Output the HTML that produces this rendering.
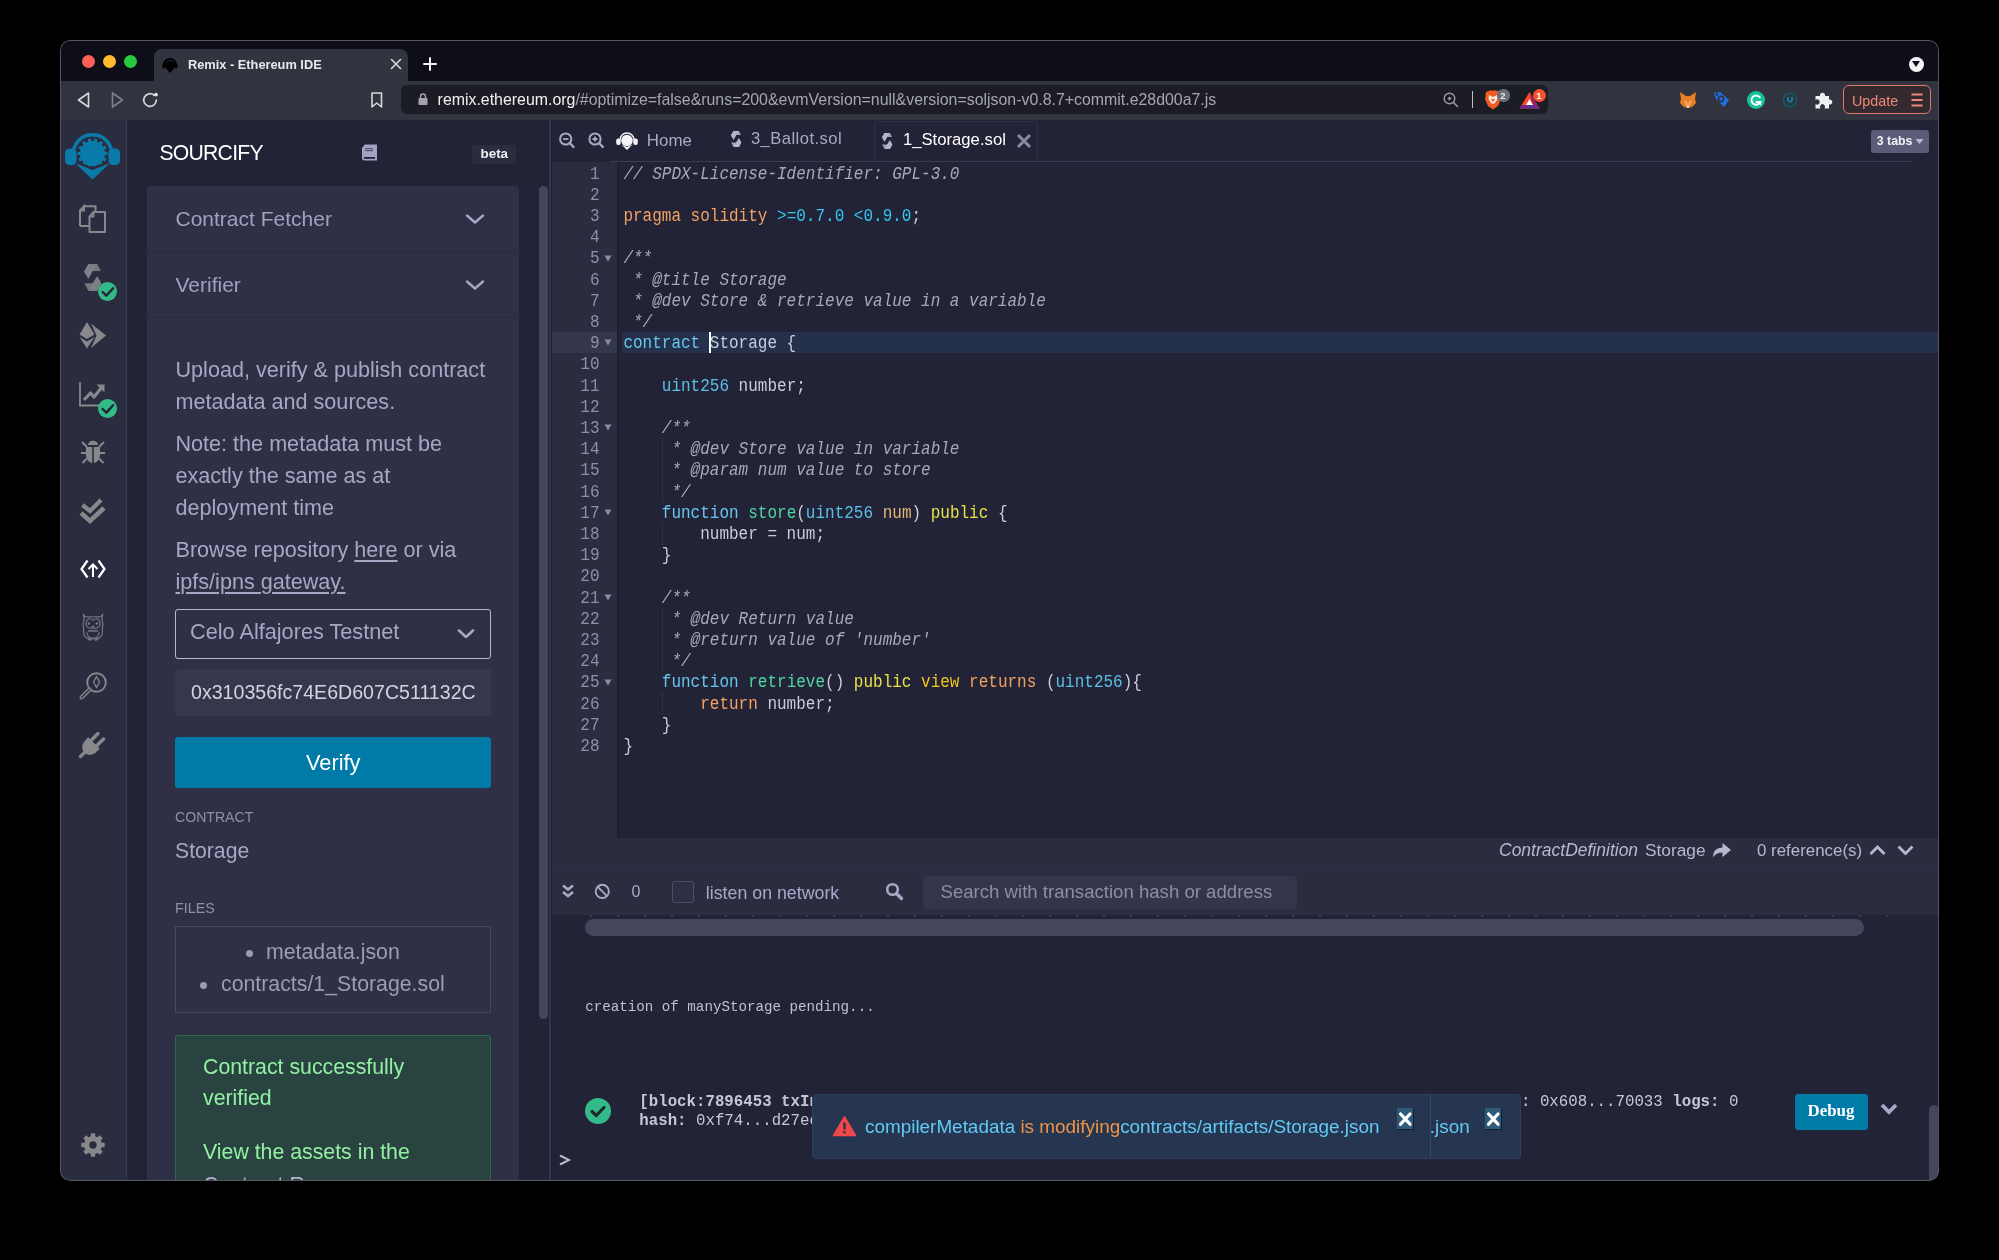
<!DOCTYPE html><html><head><meta charset="utf-8"><title>Remix</title><style>html,body{margin:0;padding:0;background:#000;}body{width:1999px;height:1260px;position:relative;overflow:hidden;}</style></head><body>
<div style="position:absolute;left:60px;top:40px;width:1879px;height:1141px;border-radius:10px;overflow:hidden;background:#0e0e18;">
<div style="position:absolute;left:-60px;top:-40px;width:1999px;height:1260px;will-change:transform;">
<div style="position:absolute;left:60px;top:40px;width:1879px;height:40px;background:#0e0e18;"></div>
<div style="position:absolute;left:60px;top:80.5px;width:1879px;height:39.5px;background:#31333f;"></div>
<div style="position:absolute;left:154px;top:49px;width:254px;height:32px;background:#31333f;border-radius:8px 8px 0 0;"></div>
<div style="position:absolute;left:81.5px;top:54.5px;width:13px;height:13px;background:#fe5f57;border-radius:50%;"></div>
<div style="position:absolute;left:102.5px;top:54.5px;width:13px;height:13px;background:#febc2e;border-radius:50%;"></div>
<div style="position:absolute;left:123.5px;top:54.5px;width:13px;height:13px;background:#28c840;border-radius:50%;"></div>
<svg style="position:absolute;left:161px;top:56px;" width="18" height="18" viewBox="0 0 18 18"><path d="M3 9 a6 6 0 0 1 12 0" fill="none" stroke="#000" stroke-width="2.2"/><rect x="1.5" y="7.5" width="3" height="5" rx="1.5" fill="#000"/><rect x="13.5" y="7.5" width="3" height="5" rx="1.5" fill="#000"/><circle cx="9" cy="9.5" r="4.8" fill="#000"/><path d="M5.5 13 L9 17 L12.5 13 Z" fill="#000"/></svg>
<div style="position:absolute;left:188px;top:58.96px;font-family:'Liberation Sans', sans-serif;font-size:12.8px;line-height:12.8px;color:#e9e9ec;font-weight:700;font-style:normal;white-space:pre;">Remix - Ethereum IDE</div>
<svg style="position:absolute;left:390px;top:58px;" width="12" height="12" viewBox="0 0 12 12"><path d="M1.5 1.5 L10.5 10.5 M10.5 1.5 L1.5 10.5" stroke="#d8d8dc" stroke-width="1.6" stroke-linecap="round"/></svg>
<svg style="position:absolute;left:423px;top:57px;" width="14" height="14" viewBox="0 0 14 14"><path d="M7 1 V13 M1 7 H13" stroke="#f2f2f4" stroke-width="2" stroke-linecap="round"/></svg>
<div style="position:absolute;left:1908.5px;top:56.5px;width:15px;height:15px;background:#f4f4f6;border-radius:50%;"></div>
<svg style="position:absolute;left:1911px;top:60px;" width="10" height="8" viewBox="0 0 10 8"><path d="M1 1 H9 L5 7 Z" fill="#0e0e18"/></svg>
<svg style="position:absolute;left:76px;top:91px;" width="16" height="18" viewBox="0 0 16 18"><path d="M12.5 2 L12.5 16 L2.5 9 Z" fill="none" stroke="#d6d6dc" stroke-width="1.6" stroke-linejoin="round"/></svg>
<svg style="position:absolute;left:110px;top:91px;" width="16" height="18" viewBox="0 0 16 18"><path d="M2.5 2 L2.5 16 L12.5 9 Z" fill="none" stroke="#7d7f8c" stroke-width="1.6" stroke-linejoin="round"/></svg>
<svg style="position:absolute;left:141px;top:90px;" width="18" height="18" viewBox="0 0 18 18"><path d="M13.2 5.3 A6.3 6.3 0 1 0 15.3 10.2" fill="none" stroke="#d6d6dc" stroke-width="1.7" stroke-linecap="round"/><circle cx="15" cy="4.6" r="1.9" fill="#e8e8ec"/></svg>
<svg style="position:absolute;left:369px;top:91px;" width="16" height="18" viewBox="0 0 16 18"><path d="M3 2 H12.5 V16 L7.75 12 L3 16 Z" fill="none" stroke="#d6d6dc" stroke-width="1.6" stroke-linejoin="round"/></svg>
<div style="position:absolute;left:401px;top:85px;width:1147px;height:29px;background:#1b1c24;border-radius:6px;"></div>
<svg style="position:absolute;left:416px;top:92px;" width="14" height="14" viewBox="0 0 14 14"><rect x="2.5" y="6" width="9" height="7" rx="1" fill="#a3a4ab"/><path d="M4.5 6 V4.5 a2.5 2.5 0 0 1 5 0 V6" fill="none" stroke="#a3a4ab" stroke-width="1.4"/></svg>
<div style="position:absolute;left:437.6px;top:91.84px;font-family:'Liberation Sans', sans-serif;font-size:15.9px;line-height:15.9px;white-space:pre;color:#a6a7ae"><span style="color:#f2f2f4">remix.ethereum.org</span>/#optimize=false&amp;runs=200&amp;evmVersion=null&amp;version=soljson-v0.8.7+commit.e28d00a7.js</div>
<svg style="position:absolute;left:1442px;top:91px;" width="18" height="18" viewBox="0 0 18 18"><circle cx="7.5" cy="7.5" r="5.3" fill="none" stroke="#9a9ba3" stroke-width="1.4"/><path d="M11.5 11.5 L15.5 15.5" stroke="#9a9ba3" stroke-width="1.6" stroke-linecap="round"/><path d="M7.5 5.5 L9.5 7.5 L7.5 9.5 L5.5 7.5Z" fill="#9a9ba3"/></svg>
<div style="position:absolute;left:1472px;top:91px;width:1.3px;height:17px;background:#bdbec4;"></div>
<svg style="position:absolute;left:1483px;top:89px;" width="20" height="22" viewBox="0 0 20 22"><path d="M3 3 L7 1.5 H13 L17 3 L18 10 L15 17 L10 20.5 L5 17 L2 10 Z" fill="#f15a22"/><path d="M6 6 L10 8 L14 6 L14.5 10 L12 14 L10 15 L8 14 L5.5 10 Z" fill="#fff" opacity="0.85"/><path d="M8 10 H12 L10 13Z" fill="#f15a22"/></svg>
<div style="position:absolute;left:1497px;top:89px;width:12.5px;height:12.5px;background:#6b6d78;border-radius:50%;"></div>
<div style="position:absolute;left:1500.3px;top:91.26px;font-family:'Liberation Sans', sans-serif;font-size:9.5px;line-height:9.5px;color:#e8e8ec;font-weight:700;font-style:normal;white-space:pre;">2</div>
<svg style="position:absolute;left:1519px;top:90px;" width="22" height="20" viewBox="0 0 22 20"><path d="M10.5 2 L20.5 18.5 H0.5 Z" fill="#ff4724"/><path d="M10.5 2 L20.5 18.5 H14 Z" fill="#9e1f63"/><path d="M0.5 18.5 H20.5 L18 15 H3 Z" fill="#662d91"/><path d="M10.5 9 L14 15 H7 Z" fill="#fff"/></svg>
<div style="position:absolute;left:1532.5px;top:88.5px;width:13px;height:13px;background:#f4512c;border-radius:50%;"></div>
<div style="position:absolute;left:1536.3px;top:90.96px;font-family:'Liberation Sans', sans-serif;font-size:9.5px;line-height:9.5px;color:#fff;font-weight:700;font-style:normal;white-space:pre;">1</div>
<svg style="position:absolute;left:1678px;top:90px;" width="20" height="20" viewBox="0 0 20 20"><path d="M2 2 L8 6 H12 L18 2 L17 9 L18 13 L14 17 L10 18 L6 17 L2 13 L3 9 Z" fill="#e87f24"/><path d="M6 10 L9 12 L10 16 L11 12 L14 10 L12 15 L10 17 L8 15Z" fill="#f5b27a"/><circle cx="10" cy="16.8" r="1.2" fill="#ddd"/></svg>
<svg style="position:absolute;left:1712px;top:90px;" width="20" height="20" viewBox="0 0 20 20"><path d="M2 3 L8 2 L17 10 L12 17 L4 9 Z" fill="#1f6fe5"/><circle cx="9" cy="9" r="2.6" fill="none" stroke="#31333f" stroke-width="1.6"/><circle cx="5" cy="4.5" r="1.2" fill="#31333f"/></svg>
<div style="position:absolute;left:1747px;top:91px;width:18px;height:18px;background:#15c39a;border-radius:50%;"></div>
<svg style="position:absolute;left:1747px;top:91px;" width="18" height="18" viewBox="0 0 18 18"><path d="M12.8 6.3 A4.6 4.6 0 1 0 13.3 11 H9.5" fill="none" stroke="#fff" stroke-width="1.9" stroke-linecap="round"/><path d="M11 13 L13.5 11 L13.5 14" fill="none" stroke="#fff" stroke-width="1.4"/></svg>
<svg style="position:absolute;left:1781px;top:91px;" width="18" height="18" viewBox="0 0 18 18"><circle cx="9" cy="9" r="6.8" fill="none" stroke="#0b6276" stroke-width="1.3"/><path d="M7 6 Q6 11 10 10.5 Q11.5 10 11 6" fill="none" stroke="#0c8aa8" stroke-width="1.8"/></svg>
<svg style="position:absolute;left:1813px;top:89px;" width="22" height="22" viewBox="0 0 22 22"><path d="M2.5 7 H7 A2.6 2.6 0 1 1 12 7 H16 V10.5 A2.6 2.6 0 1 1 16 15.5 V19.5 H11.5 A2.6 2.6 0 1 0 7.5 19.5 H2.5 V15 A2.6 2.6 0 1 0 2.5 11 Z" fill="#f0f0f2"/></svg>
<div style="position:absolute;left:1843px;top:85px;width:88px;height:29px;background:#332a30;border-radius:6px;box-sizing:border-box;border:1.5px solid #e0786b;"></div>
<div style="position:absolute;left:1852px;top:94.40px;font-family:'Liberation Sans', sans-serif;font-size:14.3px;line-height:14.3px;color:#ef8879;font-weight:400;font-style:normal;white-space:pre;">Update</div>
<svg style="position:absolute;left:1910px;top:92px;" width="14" height="16" viewBox="0 0 14 16"><path d="M1.5 2.5 H12.5 M1.5 8 H12.5 M1.5 13.5 H12.5" stroke="#ef8879" stroke-width="1.8"/></svg>
<div style="position:absolute;left:60px;top:120px;width:67px;height:1060px;background:#2a2c3f;"></div>
<div style="position:absolute;left:126px;top:120px;width:1px;height:1060px;background:#3a3c52;"></div>
<div style="position:absolute;left:127px;top:120px;width:423px;height:1060px;background:#222336;"></div>
<div style="position:absolute;left:550px;top:120px;width:1389px;height:1060px;background:#222336;"></div>
<svg style="position:absolute;left:62px;top:128px;" width="62" height="56" viewBox="0 0 62 56"><path d="M13.2 34.6 A19.3 19.3 0 1 1 47.8 34.6" fill="none" stroke="#0a7aa8" stroke-width="3.6"/><rect x="3" y="20.5" width="11.5" height="16.5" rx="4.5" fill="#0a7aa8"/><rect x="46.5" y="20.5" width="11.5" height="16.5" rx="4.5" fill="#0a7aa8"/><polygon points="15.59,27.15 15.59,23.85 17.98,24.06 18.60,21.36 16.35,20.51 17.78,17.55 19.85,18.77 21.57,16.61 19.92,14.87 22.49,12.82 23.82,14.82 26.31,13.62 25.58,11.33 28.79,10.60 29.12,12.98 31.88,12.98 32.21,10.60 35.42,11.33 34.69,13.62 37.18,14.82 38.51,12.82 41.08,14.87 39.43,16.61 41.15,18.77 43.22,17.55 44.65,20.51 42.40,21.36 43.02,24.06 45.41,23.85 45.41,27.15 43.02,26.94 42.40,29.64 44.65,30.49 43.22,33.45 41.15,32.23 39.43,34.39 41.08,36.13 38.51,38.18 37.18,36.18 34.69,37.38 35.42,39.67 32.21,40.40 31.88,38.02 29.12,38.02 28.79,40.40 25.58,39.67 26.31,37.38 23.82,36.18 22.49,38.18 19.92,36.13 21.57,34.39 19.85,32.23 17.78,33.45 16.35,30.49 18.60,29.64 17.98,26.94" fill="#0a7aa8"/><path d="M12.5 34.5 L30.5 41.5 L48.5 34.5 L30.5 51.5 Z" fill="#0a7aa8"/><path d="M14 34.2 L30.5 40.6 L47 34.2" fill="none" stroke="#2a2c3f" stroke-width="2.4"/></svg>
<svg style="position:absolute;left:78px;top:204px;" width="30" height="30" viewBox="0 0 30 30"><path d="M6 2.2 H17.5 V8 M2 22 V6.5 L6 2.2 V6.5 H2 M2 22 H11" fill="none" stroke="#87878c" stroke-width="2"/><path d="M15.5 8 H27 V28 H11.5 V12.5 Z M15.5 8 V12.5 H11.5" fill="none" stroke="#87878c" stroke-width="2" stroke-linejoin="round"/></svg>
<svg style="position:absolute;left:80px;top:258px;" width="26" height="40" viewBox="0 0 26 40"><polygon points="8.3,6.3 17.3,6.3 20.8,13 12.7,13 8.4,20.8 4.1,13.5" fill="#77777f"/><polygon points="8.3,6.3 17.3,6.3 12.7,13 8.4,20.8 4.1,13.5" fill="#808089"/><polygon points="17.3,18.2 21.2,25.3 17.3,32.8 8.3,32.8 4.3,25.3 12.7,25.3" fill="#75757e"/><polygon points="17.3,18.2 21.2,25.3 17.3,32.8 8.3,32.8 12.7,25.3" fill="#7e7e87"/></svg>
<div style="position:absolute;left:97.7px;top:281.7px;width:19.6px;height:19.6px;background:#32ba89;border-radius:50%;"></div>
<svg style="position:absolute;left:97.7px;top:281.7px;" width="20" height="20" viewBox="0 0 20 20"><path d="M4.6 10.0 L8.3 13.6 L15.1 6.2" fill="none" stroke="#222336" stroke-width="2.4" stroke-linecap="round" stroke-linejoin="round"/></svg>
<svg style="position:absolute;left:78px;top:320px;" width="30" height="32" viewBox="0 0 30 32"><path d="M9 2 L16.5 14.5 L9 19 L1.5 14.5 Z" fill="#87878c"/><path d="M1.5 17 L9 21.5 L16.5 17 L9 28.5 Z" fill="#87878c"/><path d="M13 3.5 L28 15.5 L13 28 L18.5 15.5 Z" fill="#87878c"/></svg>
<svg style="position:absolute;left:78px;top:381px;" width="30" height="27" viewBox="0 0 30 27"><path d="M2 1 V24.5 H22" fill="none" stroke="#87878c" stroke-width="1.8"/><path d="M6 19 L12.5 12 L16 16 L24 6" fill="none" stroke="#87878c" stroke-width="3.2" stroke-linejoin="round"/><path d="M18.5 3.5 H26.5 V11.5 Z" fill="#87878c"/></svg>
<div style="position:absolute;left:97.7px;top:398.5px;width:19.6px;height:19.6px;background:#32ba89;border-radius:50%;"></div>
<svg style="position:absolute;left:97.7px;top:398.5px;" width="20" height="20" viewBox="0 0 20 20"><path d="M4.6 10.0 L8.3 13.6 L15.1 6.2" fill="none" stroke="#222336" stroke-width="2.4" stroke-linecap="round" stroke-linejoin="round"/></svg>
<svg style="position:absolute;left:79px;top:438px;" width="28" height="28" viewBox="0 0 28 28"><path d="M9 7 A5 4.2 0 0 1 19 7 Z" fill="#87878c"/><path d="M7 9 H21 V17 A7 8 0 0 1 7 17 Z" fill="#87878c"/><path d="M14 9 V25" stroke="#2a2c3f" stroke-width="1.6"/><path d="M2 15 H7 M21 15 H26 M3 4 L8 9 M25 4 L20 9 M3.5 25 L8 20.5 M24.5 25 L20 20.5" stroke="#87878c" stroke-width="2"/></svg>
<svg style="position:absolute;left:78px;top:496px;" width="30" height="30" viewBox="0 0 30 30"><path d="M4.5 9 L12 15 L23 4" fill="none" stroke="#87878c" stroke-width="4.2"/><path d="M3 17 L12 25 L26 12" fill="none" stroke="#87878c" stroke-width="4.6"/></svg>
<svg style="position:absolute;left:79px;top:558px;" width="28" height="22" viewBox="0 0 28 22"><path d="M8.5 2.5 L2.5 11 L8.5 19.5 M19.5 2.5 L25.5 11 L19.5 19.5" fill="none" stroke="#fff" stroke-width="2.2" stroke-linejoin="miter"/><path d="M14 19 V6.5 M9.5 11 L14 6.5 L18.5 11" fill="none" stroke="#fff" stroke-width="2"/></svg>
<svg style="position:absolute;left:78px;top:610px;" width="30" height="35" viewBox="0 0 30 35"><path d="M5.2 4.2 L7 6.6 Q15 7.4 23 6.6 L24.8 4.2 L23.8 8.5 Q25.8 14 24.3 19.5 Q25 24.5 22.3 27.3 L20 28.8 H10 L7.7 27.3 Q5 24.5 5.7 19.5 Q4.2 14 6.2 8.5 Z" fill="none" stroke="#787984" stroke-width="1.15" stroke-linejoin="round"/><path d="M15 10.4 Q13 8.4 10.8 8.8 A4.7 4.7 0 1 0 15 17.8 A4.7 4.7 0 1 0 19.2 8.8 Q17 8.4 15 10.4 Z" fill="none" stroke="#787984" stroke-width="1.15"/><circle cx="10.8" cy="13.5" r="1.2" fill="#787984"/><circle cx="18.9" cy="13.5" r="1.2" fill="#787984"/><path d="M13.6 16.6 Q15 14.9 16.4 16.6 Q15 17.9 13.6 16.6 Z" fill="none" stroke="#787984" stroke-width="1"/><path d="M9.8 20.9 H20.2" stroke="#787984" stroke-width="1.5"/><path d="M8.8 22.2 Q9.2 28 15 28.2 Q20.8 28 21.2 22.2" fill="none" stroke="#787984" stroke-width="1.15"/><path d="M10.2 28.3 L12.2 30.2 M17.8 30.2 L19.8 28.3" stroke="#787984" stroke-width="1.7" stroke-linecap="round"/></svg>
<svg style="position:absolute;left:78px;top:671px;" width="30" height="32" viewBox="0 0 30 32"><circle cx="18.5" cy="11.5" r="9.3" fill="none" stroke="#87878c" stroke-width="1.9"/><path d="M11.5 18.5 L3.5 26.5" stroke="#87878c" stroke-width="4" stroke-linecap="round"/><path d="M11.5 18.5 L3.5 26.5" stroke="#2a2c3f" stroke-width="1.3" stroke-linecap="round"/><path d="M18.5 5.5 L21.5 11 L18.5 16.5 L15.5 11 Z" fill="none" stroke="#87878c" stroke-width="1.3"/></svg>
<svg style="position:absolute;left:77px;top:728px;" width="32" height="32" viewBox="0 0 32 32"><path d="M6.5 24 A9 9 0 0 1 10.5 11 L21 21.5 A9 9 0 0 1 8 25.5 Z" fill="#87878c"/><path d="M14 12.5 L21 5.5 M19.5 18 L26.5 11" stroke="#87878c" stroke-width="3.4" stroke-linecap="round"/><path d="M8.5 23.5 L3.5 28.5" stroke="#87878c" stroke-width="3.4" stroke-linecap="round"/><path d="M10 10.5 L21.5 22" stroke="#87878c" stroke-width="3.4"/></svg>
<svg style="position:absolute;left:80px;top:1132px;" width="26" height="26" viewBox="0 0 26 26"><circle cx="13" cy="13" r="6.4" fill="none" stroke="#87878c" stroke-width="5.4"/><rect x="10.8" y="1.3" width="4.4" height="5.5" fill="#87878c" transform="rotate(0 13 13)"/><rect x="10.8" y="1.3" width="4.4" height="5.5" fill="#87878c" transform="rotate(45 13 13)"/><rect x="10.8" y="1.3" width="4.4" height="5.5" fill="#87878c" transform="rotate(90 13 13)"/><rect x="10.8" y="1.3" width="4.4" height="5.5" fill="#87878c" transform="rotate(135 13 13)"/><rect x="10.8" y="1.3" width="4.4" height="5.5" fill="#87878c" transform="rotate(180 13 13)"/><rect x="10.8" y="1.3" width="4.4" height="5.5" fill="#87878c" transform="rotate(225 13 13)"/><rect x="10.8" y="1.3" width="4.4" height="5.5" fill="#87878c" transform="rotate(270 13 13)"/><rect x="10.8" y="1.3" width="4.4" height="5.5" fill="#87878c" transform="rotate(315 13 13)"/></svg>
<div style="position:absolute;left:159.4px;top:142.45px;font-family:'Liberation Sans', sans-serif;font-size:21.2px;line-height:21.2px;color:#ffffff;font-weight:400;font-style:normal;white-space:pre;letter-spacing:-0.75px;">SOURCIFY</div>
<svg style="position:absolute;left:361px;top:144px;" width="17" height="17" viewBox="0 0 17 17"><path d="M2.5 2.5 Q2.5 0.5 4.5 0.5 H16 V16.5 H4 Q1 16.5 1 14 V4 Z" fill="#a2a3c2"/><rect x="4" y="4" width="8" height="1.2" fill="#222336" opacity="0.6"/><rect x="4" y="6" width="8" height="1.2" fill="#222336" opacity="0.6"/><rect x="3" y="13" width="11" height="1.8" fill="#222336"/></svg>
<div style="position:absolute;left:471.7px;top:144.7px;width:44.6px;height:19px;background:#2a2c3f;border-radius:2px;"></div>
<div style="position:absolute;left:480.5px;top:147.36px;font-family:'Liberation Sans', sans-serif;font-size:13.4px;line-height:13.4px;color:#f0f0f4;font-weight:700;font-style:normal;white-space:pre;">beta</div>
<div style="position:absolute;left:147px;top:186.4px;width:371.8px;height:1000px;background:#2f3045;border-radius:4px 4px 0 0;"></div>
<div style="position:absolute;left:147px;top:251px;width:371.8px;height:1.2px;background:#282a3d;"></div>
<div style="position:absolute;left:147px;top:317px;width:371.8px;height:1.2px;background:#282a3d;"></div>
<div style="position:absolute;left:175.5px;top:208.22px;font-family:'Liberation Sans', sans-serif;font-size:21px;line-height:21px;color:#9fa1c0;font-weight:400;font-style:normal;white-space:pre;">Contract Fetcher</div>
<div style="position:absolute;left:175.5px;top:273.72px;font-family:'Liberation Sans', sans-serif;font-size:21px;line-height:21px;color:#9fa1c0;font-weight:400;font-style:normal;white-space:pre;">Verifier</div>
<svg style="position:absolute;left:464px;top:212px;" width="22" height="14" viewBox="0 0 22 14"><path d="M3 3.5 L11 10.5 L19 3.5" fill="none" stroke="#a5a7c5" stroke-width="2.4" stroke-linecap="round" stroke-linejoin="round"/></svg>
<svg style="position:absolute;left:464px;top:277.5px;" width="22" height="14" viewBox="0 0 22 14"><path d="M3 3.5 L11 10.5 L19 3.5" fill="none" stroke="#a5a7c5" stroke-width="2.4" stroke-linecap="round" stroke-linejoin="round"/></svg>
<div style="position:absolute;left:175.5px;top:359.02px;font-family:'Liberation Sans', sans-serif;font-size:21.6px;line-height:21.6px;color:#a5a7c5;font-weight:400;font-style:normal;white-space:pre;">Upload, verify &amp; publish contract</div>
<div style="position:absolute;left:175.5px;top:390.62px;font-family:'Liberation Sans', sans-serif;font-size:21.6px;line-height:21.6px;color:#a5a7c5;font-weight:400;font-style:normal;white-space:pre;">metadata and sources.</div>
<div style="position:absolute;left:175.5px;top:432.82px;font-family:'Liberation Sans', sans-serif;font-size:21.6px;line-height:21.6px;color:#a5a7c5;font-weight:400;font-style:normal;white-space:pre;">Note: the metadata must be</div>
<div style="position:absolute;left:175.5px;top:465.02px;font-family:'Liberation Sans', sans-serif;font-size:21.6px;line-height:21.6px;color:#a5a7c5;font-weight:400;font-style:normal;white-space:pre;">exactly the same as at</div>
<div style="position:absolute;left:175.5px;top:496.62px;font-family:'Liberation Sans', sans-serif;font-size:21.6px;line-height:21.6px;color:#a5a7c5;font-weight:400;font-style:normal;white-space:pre;">deployment time</div>
<div style="position:absolute;left:175.5px;top:539.02px;font-family:'Liberation Sans', sans-serif;font-size:21.6px;line-height:21.6px;color:#a5a7c5;font-weight:400;font-style:normal;white-space:pre;">Browse repository <span style="text-decoration:underline;text-underline-offset:3px">here</span> or via</div>
<div style="position:absolute;left:175.5px;top:570.62px;font-family:'Liberation Sans', sans-serif;font-size:21.6px;line-height:21.6px;color:#a5a7c5;font-weight:400;font-style:normal;white-space:pre;"><span style="text-decoration:underline;text-underline-offset:3px">ipfs/ipns gateway.</span></div>
<div style="position:absolute;left:175px;top:609px;width:316.3px;height:49.6px;background:transparent;box-sizing:border-box;border:1.3px solid #b9bac8;border-radius:3px;"></div>
<div style="position:absolute;left:190px;top:621.13px;font-family:'Liberation Sans', sans-serif;font-size:21.7px;line-height:21.7px;color:#a5a7c5;font-weight:400;font-style:normal;white-space:pre;">Celo Alfajores Testnet</div>
<svg style="position:absolute;left:456px;top:627px;" width="20" height="14" viewBox="0 0 20 14"><path d="M3 3.5 L10 10 L17 3.5" fill="none" stroke="#a5a7c5" stroke-width="2.6" stroke-linecap="round" stroke-linejoin="round"/></svg>
<div style="position:absolute;left:175px;top:669.4px;width:316.3px;height:46.6px;background:#35384c;border-radius:3px;"></div>
<div style="position:absolute;left:175px;top:669.4px;width:301px;height:46.6px;overflow:hidden">
<div style="position:absolute;left:16px;top:13.31px;font-family:'Liberation Sans', sans-serif;font-size:19.6px;line-height:19.6px;color:#d2d3de;font-weight:400;font-style:normal;white-space:pre;">0x310356fc74E6D607C511132C9D9aC6</div>
</div>
<div style="position:absolute;left:175px;top:737.3px;width:316.3px;height:51px;background:#007aa6;border-radius:3px;"></div>
<div style="position:absolute;left:306px;top:752.05px;font-family:'Liberation Sans', sans-serif;font-size:21.8px;line-height:21.8px;color:#ffffff;font-weight:400;font-style:normal;white-space:pre;">Verify</div>
<div style="position:absolute;left:175px;top:810.46px;font-family:'Liberation Sans', sans-serif;font-size:14.1px;line-height:14.1px;color:#8f90a3;font-weight:400;font-style:normal;white-space:pre;">CONTRACT</div>
<div style="position:absolute;left:175px;top:840.05px;font-family:'Liberation Sans', sans-serif;font-size:21.2px;line-height:21.2px;color:#a5a7c5;font-weight:400;font-style:normal;white-space:pre;">Storage</div>
<div style="position:absolute;left:175px;top:900.60px;font-family:'Liberation Sans', sans-serif;font-size:14.3px;line-height:14.3px;color:#8f90a3;font-weight:400;font-style:normal;white-space:pre;">FILES</div>
<div style="position:absolute;left:175px;top:926px;width:316.3px;height:86.7px;background:transparent;box-sizing:border-box;border:1px solid #44465b;"></div>
<div style="position:absolute;left:245.5px;top:949.5px;width:7px;height:7px;background:#9a9bab;border-radius:50%;"></div>
<div style="position:absolute;left:266px;top:941.97px;font-family:'Liberation Sans', sans-serif;font-size:21.3px;line-height:21.3px;color:#9c9daf;font-weight:400;font-style:normal;white-space:pre;">metadata.json</div>
<div style="position:absolute;left:199.5px;top:981.5px;width:7px;height:7px;background:#9a9bab;border-radius:50%;"></div>
<div style="position:absolute;left:221px;top:973.87px;font-family:'Liberation Sans', sans-serif;font-size:21.3px;line-height:21.3px;color:#9c9daf;font-weight:400;font-style:normal;white-space:pre;">contracts/1_Storage.sol</div>
<div style="position:absolute;left:175px;top:1035px;width:316.3px;height:200px;background:#284340;box-sizing:border-box;border:1px solid #2c6a50;border-radius:3px;"></div>
<div style="position:absolute;left:203px;top:1056.97px;font-family:'Liberation Sans', sans-serif;font-size:21.3px;line-height:21.3px;color:#93f0a3;font-weight:400;font-style:normal;white-space:pre;">Contract successfully</div>
<div style="position:absolute;left:203px;top:1088.37px;font-family:'Liberation Sans', sans-serif;font-size:21.3px;line-height:21.3px;color:#93f0a3;font-weight:400;font-style:normal;white-space:pre;">verified</div>
<div style="position:absolute;left:203px;top:1142.47px;font-family:'Liberation Sans', sans-serif;font-size:21.3px;line-height:21.3px;color:#93f0a3;font-weight:400;font-style:normal;white-space:pre;">View the assets in the</div>
<div style="position:absolute;left:203px;top:1175.47px;font-family:'Liberation Sans', sans-serif;font-size:21.3px;line-height:21.3px;color:#b4b2d6;font-weight:400;font-style:normal;white-space:pre;">Contract Repo</div>
<div style="position:absolute;left:538.9px;top:186.2px;width:9.4px;height:832.4px;background:#44465e;border-radius:5px;"></div>
<div style="position:absolute;left:549px;top:120px;width:1.7px;height:1060px;background:#33354a;"></div>
<div style="position:absolute;left:550.8px;top:120px;width:1.2px;height:1060px;background:#1f2033;"></div>
<svg style="position:absolute;left:557px;top:131px;" width="20" height="20" viewBox="0 0 20 20"><circle cx="8.7" cy="8" r="5.6" fill="none" stroke="#a8a9c8" stroke-width="2"/><path d="M12.7 12 L16.5 16" stroke="#a8a9c8" stroke-width="2.4" stroke-linecap="round"/><path d="M6 8 H11.4" stroke="#a8a9c8" stroke-width="1.8"/></svg>
<svg style="position:absolute;left:586px;top:131px;" width="20" height="20" viewBox="0 0 20 20"><circle cx="9" cy="8" r="5.6" fill="none" stroke="#a8a9c8" stroke-width="2"/><path d="M13 12 L16.8 16" stroke="#a8a9c8" stroke-width="2.4" stroke-linecap="round"/><path d="M6.5 8 H11.5 M9 5.5 V10.5" stroke="#a8a9c8" stroke-width="1.8"/></svg>
<svg style="position:absolute;left:615px;top:130px;" width="24" height="21" viewBox="0 0 24 21"><path d="M5 10 A7 7 0 0 1 19 10" fill="none" stroke="#f4f4f8" stroke-width="1.5"/><rect x="1.2" y="8.5" width="4.5" height="6.5" rx="2" fill="#f4f4f8"/><rect x="18.3" y="8.5" width="4.5" height="6.5" rx="2" fill="#f4f4f8"/><circle cx="12" cy="10.5" r="5.8" fill="#f4f4f8"/><path d="M6.5 14.5 L12 17 L17.5 14.5 L12 20 Z" fill="#f4f4f8"/></svg>
<div style="position:absolute;left:646.8px;top:133.29px;font-family:'Liberation Sans', sans-serif;font-size:16.9px;line-height:16.9px;color:#a8a9c8;font-weight:400;font-style:normal;white-space:pre;">Home</div>
<svg style="position:absolute;left:730.6px;top:131.4px" width="12" height="17" viewBox="0 0 12 17"><g transform="scale(0.6) translate(-4.1 -6.3)"><polygon points="8.3,6.3 17.3,6.3 20.8,13 12.7,13 8.4,20.8 4.1,13.5" fill="#b4b5cc" opacity="0.85"/><polygon points="8.3,6.3 17.3,6.3 12.7,13 8.4,20.8 4.1,13.5" fill="#b4b5cc"/><polygon points="17.3,18.2 21.2,25.3 17.3,32.8 8.3,32.8 4.3,25.3 12.7,25.3" fill="#b4b5cc" opacity="0.85"/><polygon points="17.3,18.2 21.2,25.3 17.3,32.8 8.3,32.8 12.7,25.3" fill="#b4b5cc"/></g></svg>
<div style="position:absolute;left:750.9px;top:130.55px;font-family:'Liberation Sans', sans-serif;font-size:16.6px;line-height:16.6px;color:#a8a9c8;font-weight:400;font-style:normal;white-space:pre;letter-spacing:0.45px;">3_Ballot.sol</div>
<div style="position:absolute;left:873.7px;top:121px;width:164.2px;height:41px;background:#222336;box-sizing:border-box;border:1px solid #2c2f44;border-bottom:none;"></div>
<svg style="position:absolute;left:882px;top:133px" width="12" height="17" viewBox="0 0 12 17"><g transform="scale(0.6) translate(-4.1 -6.3)"><polygon points="8.3,6.3 17.3,6.3 20.8,13 12.7,13 8.4,20.8 4.1,13.5" fill="#b4b5cc" opacity="0.85"/><polygon points="8.3,6.3 17.3,6.3 12.7,13 8.4,20.8 4.1,13.5" fill="#b4b5cc"/><polygon points="17.3,18.2 21.2,25.3 17.3,32.8 8.3,32.8 4.3,25.3 12.7,25.3" fill="#b4b5cc" opacity="0.85"/><polygon points="17.3,18.2 21.2,25.3 17.3,32.8 8.3,32.8 12.7,25.3" fill="#b4b5cc"/></g></svg>
<div style="position:absolute;left:902.9px;top:131.56px;font-family:'Liberation Sans', sans-serif;font-size:16.7px;line-height:16.7px;color:#ffffff;font-weight:400;font-style:normal;white-space:pre;">1_Storage.sol</div>
<svg style="position:absolute;left:1015px;top:132px;" width="18" height="18" viewBox="0 0 18 18"><path d="M3 3 L15 15 M15 3 L3 15" stroke="#8a8ca6" stroke-width="3"/></svg>
<div style="position:absolute;left:610px;top:161px;width:1302px;height:1.3px;background:#3a3d52;"></div>
<div style="position:absolute;left:1870.8px;top:129.8px;width:57.8px;height:22.8px;background:#5b5c78;border-radius:3px;"></div>
<div style="position:absolute;left:1876.8px;top:135.19px;font-family:'Liberation Sans', sans-serif;font-size:12.3px;line-height:12.3px;color:#f2f2f6;font-weight:700;font-style:normal;white-space:pre;">3 tabs</div>
<svg style="position:absolute;left:1915px;top:138px;" width="9" height="7" viewBox="0 0 9 7"><path d="M0.5 1 H8.5 L4.5 6 Z" fill="#b6b7d0"/></svg>
<div style="position:absolute;left:552px;top:162px;width:64.5px;height:676px;background:#2a2c3f;"></div>
<div style="position:absolute;left:616.5px;top:162px;width:1.5px;height:676px;background:#1c1d2c;"></div>
<div style="position:absolute;left:552px;top:331.9px;width:64.5px;height:20.9px;background:#34364b;"></div>
<div style="position:absolute;left:622px;top:331.9px;width:1317px;height:20.9px;background:#25304a;"></div>
<div style="position:absolute;left:708.8px;top:331.9px;width:2px;height:20.9px;background:#ffffff;"></div>
<div style="position:absolute;left:589.9px;top:166.54px;font-family:'Liberation Mono', monospace;font-size:16px;line-height:16px;color:#8d8fad;font-weight:400;font-style:normal;white-space:pre;transform:scaleY(1.13);transform-origin:0 12.26px;">1</div>
<div style="position:absolute;left:623.4px;top:166.54px;font-family:'Liberation Mono', monospace;font-size:16px;line-height:16px;color:#cbcbe0;font-weight:400;font-style:normal;white-space:pre;transform:scaleY(1.1);transform-origin:0 12.26px;"><span style="color:#a9a9b3;font-style:italic;">// SPDX-License-Identifier: GPL-3.0</span></div>
<div style="position:absolute;left:589.9px;top:187.74px;font-family:'Liberation Mono', monospace;font-size:16px;line-height:16px;color:#8d8fad;font-weight:400;font-style:normal;white-space:pre;transform:scaleY(1.13);transform-origin:0 12.26px;">2</div>
<div style="position:absolute;left:589.9px;top:208.94px;font-family:'Liberation Mono', monospace;font-size:16px;line-height:16px;color:#8d8fad;font-weight:400;font-style:normal;white-space:pre;transform:scaleY(1.13);transform-origin:0 12.26px;">3</div>
<div style="position:absolute;left:623.4px;top:208.94px;font-family:'Liberation Mono', monospace;font-size:16px;line-height:16px;color:#cbcbe0;font-weight:400;font-style:normal;white-space:pre;transform:scaleY(1.1);transform-origin:0 12.26px;"><span style="color:#f3a262;">pragma solidity</span><span style="color:#cbcbe0;"> </span><span style="color:#35c6ef;">&gt;=0.7.0 &lt;0.9.0</span><span style="color:#cbcbe0;">;</span></div>
<div style="position:absolute;left:589.9px;top:230.14px;font-family:'Liberation Mono', monospace;font-size:16px;line-height:16px;color:#8d8fad;font-weight:400;font-style:normal;white-space:pre;transform:scaleY(1.13);transform-origin:0 12.26px;">4</div>
<div style="position:absolute;left:589.9px;top:251.34px;font-family:'Liberation Mono', monospace;font-size:16px;line-height:16px;color:#8d8fad;font-weight:400;font-style:normal;white-space:pre;transform:scaleY(1.13);transform-origin:0 12.26px;">5</div>
<svg style="position:absolute;left:603.5px;top:254.60000000000002px;" width="8" height="7" viewBox="0 0 8 7"><path d="M0.5 0.5 H7.5 L4 6.5 Z" fill="#8a8ca6"/></svg>
<div style="position:absolute;left:623.4px;top:251.34px;font-family:'Liberation Mono', monospace;font-size:16px;line-height:16px;color:#cbcbe0;font-weight:400;font-style:normal;white-space:pre;transform:scaleY(1.1);transform-origin:0 12.26px;"><span style="color:#a9a9b3;font-style:italic;">/**</span></div>
<div style="position:absolute;left:589.9px;top:272.54px;font-family:'Liberation Mono', monospace;font-size:16px;line-height:16px;color:#8d8fad;font-weight:400;font-style:normal;white-space:pre;transform:scaleY(1.13);transform-origin:0 12.26px;">6</div>
<div style="position:absolute;left:623.4px;top:272.54px;font-family:'Liberation Mono', monospace;font-size:16px;line-height:16px;color:#cbcbe0;font-weight:400;font-style:normal;white-space:pre;transform:scaleY(1.1);transform-origin:0 12.26px;"><span style="color:#a9a9b3;font-style:italic;"> * @title Storage</span></div>
<div style="position:absolute;left:589.9px;top:293.74px;font-family:'Liberation Mono', monospace;font-size:16px;line-height:16px;color:#8d8fad;font-weight:400;font-style:normal;white-space:pre;transform:scaleY(1.13);transform-origin:0 12.26px;">7</div>
<div style="position:absolute;left:623.4px;top:293.74px;font-family:'Liberation Mono', monospace;font-size:16px;line-height:16px;color:#cbcbe0;font-weight:400;font-style:normal;white-space:pre;transform:scaleY(1.1);transform-origin:0 12.26px;"><span style="color:#a9a9b3;font-style:italic;"> * @dev Store &amp; retrieve value in a variable</span></div>
<div style="position:absolute;left:589.9px;top:314.94px;font-family:'Liberation Mono', monospace;font-size:16px;line-height:16px;color:#8d8fad;font-weight:400;font-style:normal;white-space:pre;transform:scaleY(1.13);transform-origin:0 12.26px;">8</div>
<div style="position:absolute;left:623.4px;top:314.94px;font-family:'Liberation Mono', monospace;font-size:16px;line-height:16px;color:#cbcbe0;font-weight:400;font-style:normal;white-space:pre;transform:scaleY(1.1);transform-origin:0 12.26px;"><span style="color:#a9a9b3;font-style:italic;"> */</span></div>
<div style="position:absolute;left:589.9px;top:336.14px;font-family:'Liberation Mono', monospace;font-size:16px;line-height:16px;color:#8d8fad;font-weight:400;font-style:normal;white-space:pre;transform:scaleY(1.13);transform-origin:0 12.26px;">9</div>
<svg style="position:absolute;left:603.5px;top:339.4px;" width="8" height="7" viewBox="0 0 8 7"><path d="M0.5 0.5 H7.5 L4 6.5 Z" fill="#8a8ca6"/></svg>
<div style="position:absolute;left:623.4px;top:336.14px;font-family:'Liberation Mono', monospace;font-size:16px;line-height:16px;color:#cbcbe0;font-weight:400;font-style:normal;white-space:pre;transform:scaleY(1.1);transform-origin:0 12.26px;"><span style="color:#66c6ef;">contract</span><span style="color:#cbcbe0;"> Storage {</span></div>
<div style="position:absolute;left:580.3px;top:357.34px;font-family:'Liberation Mono', monospace;font-size:16px;line-height:16px;color:#8d8fad;font-weight:400;font-style:normal;white-space:pre;transform:scaleY(1.13);transform-origin:0 12.26px;">10</div>
<div style="position:absolute;left:580.3px;top:378.54px;font-family:'Liberation Mono', monospace;font-size:16px;line-height:16px;color:#8d8fad;font-weight:400;font-style:normal;white-space:pre;transform:scaleY(1.13);transform-origin:0 12.26px;">11</div>
<div style="position:absolute;left:623.4px;top:378.54px;font-family:'Liberation Mono', monospace;font-size:16px;line-height:16px;color:#cbcbe0;font-weight:400;font-style:normal;white-space:pre;transform:scaleY(1.1);transform-origin:0 12.26px;"><span style="color:#cbcbe0;">    </span><span style="color:#5cbfe6;">uint256</span><span style="color:#cbcbe0;"> number;</span></div>
<div style="position:absolute;left:580.3px;top:399.74px;font-family:'Liberation Mono', monospace;font-size:16px;line-height:16px;color:#8d8fad;font-weight:400;font-style:normal;white-space:pre;transform:scaleY(1.13);transform-origin:0 12.26px;">12</div>
<div style="position:absolute;left:580.3px;top:420.94px;font-family:'Liberation Mono', monospace;font-size:16px;line-height:16px;color:#8d8fad;font-weight:400;font-style:normal;white-space:pre;transform:scaleY(1.13);transform-origin:0 12.26px;">13</div>
<svg style="position:absolute;left:603.5px;top:424.2px;" width="8" height="7" viewBox="0 0 8 7"><path d="M0.5 0.5 H7.5 L4 6.5 Z" fill="#8a8ca6"/></svg>
<div style="position:absolute;left:623.4px;top:420.94px;font-family:'Liberation Mono', monospace;font-size:16px;line-height:16px;color:#cbcbe0;font-weight:400;font-style:normal;white-space:pre;transform:scaleY(1.1);transform-origin:0 12.26px;"><span style="color:#a9a9b3;font-style:italic;">    /**</span></div>
<div style="position:absolute;left:580.3px;top:442.14px;font-family:'Liberation Mono', monospace;font-size:16px;line-height:16px;color:#8d8fad;font-weight:400;font-style:normal;white-space:pre;transform:scaleY(1.13);transform-origin:0 12.26px;">14</div>
<div style="position:absolute;left:623.4px;top:442.14px;font-family:'Liberation Mono', monospace;font-size:16px;line-height:16px;color:#cbcbe0;font-weight:400;font-style:normal;white-space:pre;transform:scaleY(1.1);transform-origin:0 12.26px;"><span style="color:#a9a9b3;font-style:italic;">     * @dev Store value in variable</span></div>
<div style="position:absolute;left:580.3px;top:463.34px;font-family:'Liberation Mono', monospace;font-size:16px;line-height:16px;color:#8d8fad;font-weight:400;font-style:normal;white-space:pre;transform:scaleY(1.13);transform-origin:0 12.26px;">15</div>
<div style="position:absolute;left:623.4px;top:463.34px;font-family:'Liberation Mono', monospace;font-size:16px;line-height:16px;color:#cbcbe0;font-weight:400;font-style:normal;white-space:pre;transform:scaleY(1.1);transform-origin:0 12.26px;"><span style="color:#a9a9b3;font-style:italic;">     * @param num value to store</span></div>
<div style="position:absolute;left:580.3px;top:484.54px;font-family:'Liberation Mono', monospace;font-size:16px;line-height:16px;color:#8d8fad;font-weight:400;font-style:normal;white-space:pre;transform:scaleY(1.13);transform-origin:0 12.26px;">16</div>
<div style="position:absolute;left:623.4px;top:484.54px;font-family:'Liberation Mono', monospace;font-size:16px;line-height:16px;color:#cbcbe0;font-weight:400;font-style:normal;white-space:pre;transform:scaleY(1.1);transform-origin:0 12.26px;"><span style="color:#a9a9b3;font-style:italic;">     */</span></div>
<div style="position:absolute;left:580.3px;top:505.74px;font-family:'Liberation Mono', monospace;font-size:16px;line-height:16px;color:#8d8fad;font-weight:400;font-style:normal;white-space:pre;transform:scaleY(1.13);transform-origin:0 12.26px;">17</div>
<svg style="position:absolute;left:603.5px;top:509.0px;" width="8" height="7" viewBox="0 0 8 7"><path d="M0.5 0.5 H7.5 L4 6.5 Z" fill="#8a8ca6"/></svg>
<div style="position:absolute;left:623.4px;top:505.74px;font-family:'Liberation Mono', monospace;font-size:16px;line-height:16px;color:#cbcbe0;font-weight:400;font-style:normal;white-space:pre;transform:scaleY(1.1);transform-origin:0 12.26px;"><span style="color:#cbcbe0;">    </span><span style="color:#66c6ef;">function</span><span style="color:#cbcbe0;"> </span><span style="color:#4fd6a4;">store</span><span style="color:#cbcbe0;">(</span><span style="color:#5cbfe6;">uint256</span><span style="color:#cbcbe0;"> </span><span style="color:#e6b57c;">num</span><span style="color:#cbcbe0;">) </span><span style="color:#e8e346;">public</span><span style="color:#cbcbe0;"> {</span></div>
<div style="position:absolute;left:580.3px;top:526.94px;font-family:'Liberation Mono', monospace;font-size:16px;line-height:16px;color:#8d8fad;font-weight:400;font-style:normal;white-space:pre;transform:scaleY(1.13);transform-origin:0 12.26px;">18</div>
<div style="position:absolute;left:623.4px;top:526.94px;font-family:'Liberation Mono', monospace;font-size:16px;line-height:16px;color:#cbcbe0;font-weight:400;font-style:normal;white-space:pre;transform:scaleY(1.1);transform-origin:0 12.26px;"><span style="color:#cbcbe0;">        number = num;</span></div>
<div style="position:absolute;left:580.3px;top:548.14px;font-family:'Liberation Mono', monospace;font-size:16px;line-height:16px;color:#8d8fad;font-weight:400;font-style:normal;white-space:pre;transform:scaleY(1.13);transform-origin:0 12.26px;">19</div>
<div style="position:absolute;left:623.4px;top:548.14px;font-family:'Liberation Mono', monospace;font-size:16px;line-height:16px;color:#cbcbe0;font-weight:400;font-style:normal;white-space:pre;transform:scaleY(1.1);transform-origin:0 12.26px;"><span style="color:#cbcbe0;">    }</span></div>
<div style="position:absolute;left:580.3px;top:569.34px;font-family:'Liberation Mono', monospace;font-size:16px;line-height:16px;color:#8d8fad;font-weight:400;font-style:normal;white-space:pre;transform:scaleY(1.13);transform-origin:0 12.26px;">20</div>
<div style="position:absolute;left:580.3px;top:590.54px;font-family:'Liberation Mono', monospace;font-size:16px;line-height:16px;color:#8d8fad;font-weight:400;font-style:normal;white-space:pre;transform:scaleY(1.13);transform-origin:0 12.26px;">21</div>
<svg style="position:absolute;left:603.5px;top:593.8px;" width="8" height="7" viewBox="0 0 8 7"><path d="M0.5 0.5 H7.5 L4 6.5 Z" fill="#8a8ca6"/></svg>
<div style="position:absolute;left:623.4px;top:590.54px;font-family:'Liberation Mono', monospace;font-size:16px;line-height:16px;color:#cbcbe0;font-weight:400;font-style:normal;white-space:pre;transform:scaleY(1.1);transform-origin:0 12.26px;"><span style="color:#a9a9b3;font-style:italic;">    /**</span></div>
<div style="position:absolute;left:580.3px;top:611.74px;font-family:'Liberation Mono', monospace;font-size:16px;line-height:16px;color:#8d8fad;font-weight:400;font-style:normal;white-space:pre;transform:scaleY(1.13);transform-origin:0 12.26px;">22</div>
<div style="position:absolute;left:623.4px;top:611.74px;font-family:'Liberation Mono', monospace;font-size:16px;line-height:16px;color:#cbcbe0;font-weight:400;font-style:normal;white-space:pre;transform:scaleY(1.1);transform-origin:0 12.26px;"><span style="color:#a9a9b3;font-style:italic;">     * @dev Return value</span></div>
<div style="position:absolute;left:580.3px;top:632.94px;font-family:'Liberation Mono', monospace;font-size:16px;line-height:16px;color:#8d8fad;font-weight:400;font-style:normal;white-space:pre;transform:scaleY(1.13);transform-origin:0 12.26px;">23</div>
<div style="position:absolute;left:623.4px;top:632.94px;font-family:'Liberation Mono', monospace;font-size:16px;line-height:16px;color:#cbcbe0;font-weight:400;font-style:normal;white-space:pre;transform:scaleY(1.1);transform-origin:0 12.26px;"><span style="color:#a9a9b3;font-style:italic;">     * @return value of &#x27;number&#x27;</span></div>
<div style="position:absolute;left:580.3px;top:654.14px;font-family:'Liberation Mono', monospace;font-size:16px;line-height:16px;color:#8d8fad;font-weight:400;font-style:normal;white-space:pre;transform:scaleY(1.13);transform-origin:0 12.26px;">24</div>
<div style="position:absolute;left:623.4px;top:654.14px;font-family:'Liberation Mono', monospace;font-size:16px;line-height:16px;color:#cbcbe0;font-weight:400;font-style:normal;white-space:pre;transform:scaleY(1.1);transform-origin:0 12.26px;"><span style="color:#a9a9b3;font-style:italic;">     */</span></div>
<div style="position:absolute;left:580.3px;top:675.34px;font-family:'Liberation Mono', monospace;font-size:16px;line-height:16px;color:#8d8fad;font-weight:400;font-style:normal;white-space:pre;transform:scaleY(1.13);transform-origin:0 12.26px;">25</div>
<svg style="position:absolute;left:603.5px;top:678.5999999999999px;" width="8" height="7" viewBox="0 0 8 7"><path d="M0.5 0.5 H7.5 L4 6.5 Z" fill="#8a8ca6"/></svg>
<div style="position:absolute;left:623.4px;top:675.34px;font-family:'Liberation Mono', monospace;font-size:16px;line-height:16px;color:#cbcbe0;font-weight:400;font-style:normal;white-space:pre;transform:scaleY(1.1);transform-origin:0 12.26px;"><span style="color:#cbcbe0;">    </span><span style="color:#66c6ef;">function</span><span style="color:#cbcbe0;"> </span><span style="color:#4fd6a4;">retrieve</span><span style="color:#cbcbe0;">() </span><span style="color:#e8e346;">public</span><span style="color:#cbcbe0;"> </span><span style="color:#f0c419;">view</span><span style="color:#cbcbe0;"> </span><span style="color:#f3a262;">returns</span><span style="color:#cbcbe0;"> (</span><span style="color:#5cbfe6;">uint256</span><span style="color:#cbcbe0;">){</span></div>
<div style="position:absolute;left:580.3px;top:696.54px;font-family:'Liberation Mono', monospace;font-size:16px;line-height:16px;color:#8d8fad;font-weight:400;font-style:normal;white-space:pre;transform:scaleY(1.13);transform-origin:0 12.26px;">26</div>
<div style="position:absolute;left:623.4px;top:696.54px;font-family:'Liberation Mono', monospace;font-size:16px;line-height:16px;color:#cbcbe0;font-weight:400;font-style:normal;white-space:pre;transform:scaleY(1.1);transform-origin:0 12.26px;"><span style="color:#cbcbe0;">        </span><span style="color:#f3a262;">return</span><span style="color:#cbcbe0;"> number;</span></div>
<div style="position:absolute;left:580.3px;top:717.74px;font-family:'Liberation Mono', monospace;font-size:16px;line-height:16px;color:#8d8fad;font-weight:400;font-style:normal;white-space:pre;transform:scaleY(1.13);transform-origin:0 12.26px;">27</div>
<div style="position:absolute;left:623.4px;top:717.74px;font-family:'Liberation Mono', monospace;font-size:16px;line-height:16px;color:#cbcbe0;font-weight:400;font-style:normal;white-space:pre;transform:scaleY(1.1);transform-origin:0 12.26px;"><span style="color:#cbcbe0;">    }</span></div>
<div style="position:absolute;left:580.3px;top:738.94px;font-family:'Liberation Mono', monospace;font-size:16px;line-height:16px;color:#8d8fad;font-weight:400;font-style:normal;white-space:pre;transform:scaleY(1.13);transform-origin:0 12.26px;">28</div>
<div style="position:absolute;left:623.4px;top:738.94px;font-family:'Liberation Mono', monospace;font-size:16px;line-height:16px;color:#cbcbe0;font-weight:400;font-style:normal;white-space:pre;transform:scaleY(1.1);transform-origin:0 12.26px;"><span style="color:#cbcbe0;">}</span></div>
<div style="position:absolute;left:662px;top:438.9px;width:1px;height:63.60000000000002px;background:transparent;border-left:1px dotted #3d3f55;"></div>
<div style="position:absolute;left:662px;top:523.7px;width:1px;height:21.200000000000045px;background:transparent;border-left:1px dotted #3d3f55;"></div>
<div style="position:absolute;left:662px;top:608.5px;width:1px;height:63.60000000000002px;background:transparent;border-left:1px dotted #3d3f55;"></div>
<div style="position:absolute;left:662px;top:693.3px;width:1px;height:21.200000000000045px;background:transparent;border-left:1px dotted #3d3f55;"></div>
<div style="position:absolute;left:552px;top:838px;width:1387px;height:32px;background:#2a2c3f;"></div>
<div style="position:absolute;left:1499px;top:842.19px;font-family:'Liberation Sans', sans-serif;font-size:17.5px;line-height:17.5px;color:#b7b8cf;font-weight:400;font-style:italic;white-space:pre;">ContractDefinition</div>
<div style="position:absolute;left:1645px;top:842.36px;font-family:'Liberation Sans', sans-serif;font-size:17.3px;line-height:17.3px;color:#b7b8cf;font-weight:400;font-style:normal;white-space:pre;">Storage</div>
<svg style="position:absolute;left:1711px;top:841px;" width="22" height="18" viewBox="0 0 22 18"><path d="M2 16.5 Q1.5 7 11.5 6.5 V2 L20 9 L11.5 16 V11.5 Q5 11.5 2 16.5Z" fill="#b7b8cf"/></svg>
<div style="position:absolute;left:1757px;top:842.69px;font-family:'Liberation Sans', sans-serif;font-size:16.9px;line-height:16.9px;color:#b7b8cf;font-weight:400;font-style:normal;white-space:pre;">0 reference(s)</div>
<svg style="position:absolute;left:1868px;top:843px;" width="19" height="14" viewBox="0 0 19 14"><path d="M2.5 11 L9.5 4 L16.5 11" fill="none" stroke="#b7b8cf" stroke-width="2.8"/></svg>
<svg style="position:absolute;left:1896px;top:843px;" width="19" height="14" viewBox="0 0 19 14"><path d="M2.5 3.5 L9.5 10.5 L16.5 3.5" fill="none" stroke="#b7b8cf" stroke-width="2.8"/></svg>
<div style="position:absolute;left:552px;top:870px;width:1387px;height:44.6px;background:#2a2c3f;"></div>
<div style="position:absolute;left:552px;top:869.5px;width:1387px;height:1px;background:#2e3045;"></div>
<svg style="position:absolute;left:561px;top:883px;" width="14" height="17" viewBox="0 0 14 17"><path d="M2 2.5 L7 6.5 L12 2.5 M2 9 L7 13 L12 9" fill="none" stroke="#a8a9c8" stroke-width="2.6"/></svg>
<svg style="position:absolute;left:593px;top:882px;" width="19" height="19" viewBox="0 0 19 19"><circle cx="9.3" cy="9.4" r="6.6" fill="none" stroke="#a8a9c8" stroke-width="1.9"/><path d="M4.8 4.9 L13.8 13.9" stroke="#a8a9c8" stroke-width="1.9"/></svg>
<div style="position:absolute;left:631.5px;top:884.16px;font-family:'Liberation Sans', sans-serif;font-size:16px;line-height:16px;color:#a8a9c8;font-weight:400;font-style:normal;white-space:pre;">0</div>
<div style="position:absolute;left:672.3px;top:881.3px;width:21.5px;height:21.5px;background:#2d2f43;box-sizing:border-box;border:1.3px solid #4b4d64;border-radius:3px;"></div>
<div style="position:absolute;left:705.8px;top:885.43px;font-family:'Liberation Sans', sans-serif;font-size:17.8px;line-height:17.8px;color:#a8a9c8;font-weight:400;font-style:normal;white-space:pre;">listen on network</div>
<svg style="position:absolute;left:884px;top:881px;" width="22" height="22" viewBox="0 0 22 22"><circle cx="8.5" cy="8.5" r="5.3" fill="none" stroke="#a8a9c8" stroke-width="2.6"/><path d="M12.5 12.5 L17.5 17.5" stroke="#a8a9c8" stroke-width="3.2" stroke-linecap="round"/></svg>
<div style="position:absolute;left:923px;top:875.6px;width:374px;height:33.4px;background:#33354a;border-radius:3px;"></div>
<div style="position:absolute;left:940.5px;top:883.26px;font-family:'Liberation Sans', sans-serif;font-size:18.6px;line-height:18.6px;color:#8c8ea8;font-weight:400;font-style:normal;white-space:pre;">Search with transaction hash or address</div>
<div style="position:absolute;left:590px;top:914.6px;width:1300px;height:2px;background:transparent;background-image:repeating-linear-gradient(90deg,#4a4c62 0 2px,transparent 2px 27px);opacity:0.6;"></div>
<div style="position:absolute;left:585px;top:918.5px;width:1279.4px;height:17.2px;background:#44465e;border-radius:9px;"></div>
<div style="position:absolute;left:585.2px;top:999.72px;font-family:'Liberation Mono', monospace;font-size:14.2px;line-height:14.2px;color:#c0c1cd;font-weight:400;font-style:normal;white-space:pre;">creation of manyStorage pending...</div>
<div style="position:absolute;left:584.7px;top:1097.5px;width:26px;height:26px;background:#32ba89;border-radius:50%;"></div>
<svg style="position:absolute;left:584.7px;top:1097.5px;" width="26" height="26" viewBox="0 0 26 26"><path d="M7 13.5 L11.3 17.5 L19 9.5" fill="none" stroke="#1e2a2a" stroke-width="3.2" stroke-linecap="round" stroke-linejoin="round"/></svg>
<div style="position:absolute;left:639.3px;top:1094.92px;font-family:'Liberation Mono', monospace;font-size:15.76px;line-height:15.76px;color:#c6c6d6;font-weight:700;font-style:normal;white-space:pre;">[block:7896453 txIndex:0] from: 0x310...6a8fd to: manyStorage.(constructor) value: 0 wei data</div>
<div style="position:absolute;left:639.3px;top:1113.92px;font-family:'Liberation Mono', monospace;font-size:15.76px;line-height:15.76px;color:#c6c6d6;font-weight:400;font-style:normal;white-space:pre;"><b>hash:</b> 0xf74...d27ec</div>
<div style="position:absolute;left:1521px;top:1090px;width:260px;height:45px;background:#222336;"></div>
<div style="position:absolute;left:1521px;top:1094.62px;font-family:'Liberation Mono', monospace;font-size:15.76px;line-height:15.76px;color:#c6c6d6;font-weight:400;font-style:normal;white-space:pre;">: 0x608...70033 <b>logs:</b> 0</div>
<div style="position:absolute;left:1795px;top:1093.8px;width:72.5px;height:36.2px;background:#007aa6;border-radius:3px;"></div>
<div style="position:absolute;left:1807.5px;top:1102.55px;font-family:'Liberation Serif', serif;font-size:16.9px;line-height:16.9px;color:#ffffff;font-weight:700;font-style:normal;white-space:pre;">Debug</div>
<svg style="position:absolute;left:1879px;top:1100px;" width="20" height="18" viewBox="0 0 20 18"><path d="M3 5 L10 12 L17 5" fill="none" stroke="#a8a9c8" stroke-width="3.8"/></svg>
<div style="position:absolute;left:1928.7px;top:1104.5px;width:10.3px;height:80px;background:#44465e;border-radius:5px;"></div>
<svg style="position:absolute;left:557px;top:1152px;" width="16" height="16" viewBox="0 0 16 16"><path d="M3 3.5 L12 8 L3 12.5" fill="none" stroke="#b8b9cc" stroke-width="2"/></svg>
<div style="position:absolute;left:811.9px;top:1094px;width:709.1px;height:64.9px;background:#263650;box-sizing:border-box;border:1px solid #2d3f5c;border-radius:4px;"></div>
<div style="position:absolute;left:1430.3px;top:1095px;width:1.2px;height:63px;background:#2f4a6c;"></div>
<svg style="position:absolute;left:832px;top:1115px;" width="25" height="22" viewBox="0 0 25 22"><path d="M12.5 2 L23.5 20.5 H1.5 Z" fill="#f2474a" stroke="#f2474a" stroke-width="1.5" stroke-linejoin="round"/><rect x="11.3" y="7.5" width="2.4" height="7" fill="#263650"/><circle cx="12.5" cy="17.2" r="1.3" fill="#263650"/></svg>
<div style="position:absolute;left:865px;top:1117.70px;font-family:'Liberation Sans', sans-serif;font-size:18.9px;line-height:18.9px;color:#62c9f2;font-weight:400;font-style:normal;white-space:pre;"><span style="color:#62c9f2">compilerMetadata</span><span style="color:#ee9447"> is modifying</span><span style="color:#62c9f2">contracts/artifacts/Storage.json</span></div>
<div style="position:absolute;left:1429.8px;top:1117.70px;font-family:'Liberation Sans', sans-serif;font-size:18.9px;line-height:18.9px;color:#62c9f2;font-weight:400;font-style:normal;white-space:pre;">.json</div>
<div style="position:absolute;left:1396.6px;top:1108.1px;width:16.2px;height:21.3px;background:#2f5b7a;box-shadow:1px 1px 0 #0f1d28;"></div>
<svg style="position:absolute;left:1396.6px;top:1108.1px;" width="17" height="22" viewBox="0 0 17 22"><path d="M3.6 6 L13 16.2 M13 6 L3.6 16.2" stroke="#ffffff" stroke-width="3.2" stroke-linecap="round"/></svg>
<div style="position:absolute;left:1484.7px;top:1108.1px;width:16.2px;height:21.3px;background:#2f5b7a;box-shadow:1px 1px 0 #0f1d28;"></div>
<svg style="position:absolute;left:1484.7px;top:1108.1px;" width="17" height="22" viewBox="0 0 17 22"><path d="M3.6 6 L13 16.2 M13 6 L3.6 16.2" stroke="#ffffff" stroke-width="3.2" stroke-linecap="round"/></svg>
</div>
<div style="position:absolute;left:0;top:0;right:0;bottom:0;border-radius:10px;box-shadow:inset 0 0 0 1px #55565f;pointer-events:none"></div>
</div>
</body></html>
